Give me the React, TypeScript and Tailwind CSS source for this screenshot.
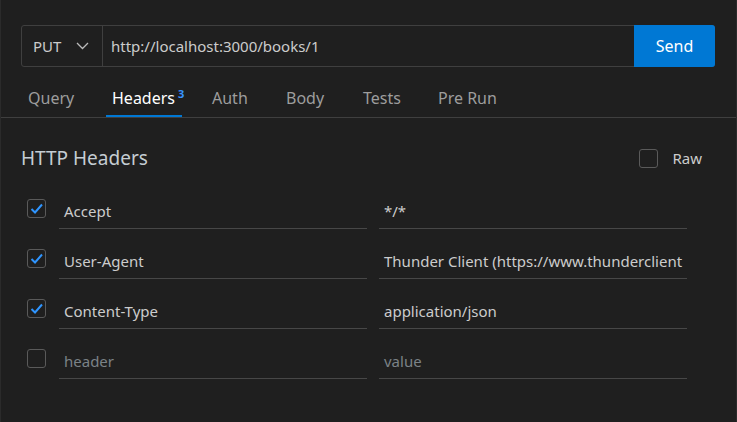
import React from "react"

const rows = [
  { key: "Accept", value: "*/*", on: true },
  { key: "User-Agent", value: "Thunder Client (https://www.thunderclient", on: true },
  { key: "Content-Type", value: "application/json", on: true },
]

const tabs = [
  { name: "Query", w: "w-[84px]" },
  { name: "Headers", w: "w-[100px]" },
  { name: "Auth", w: "w-[74px]" },
  { name: "Body", w: "w-[77px]" },
  { name: "Tests", w: "w-[75px]" },
  { name: "Pre Run", w: "w-[80px]" },
]

function Check({ on }: { on: boolean }) {
  return (
    <div className="w-[19px] h-[19px] shrink-0 rounded-[3px] border border-[#5a5a5a] flex items-center justify-center">
      {on && (
        <svg width="15" height="15" viewBox="0 0 15 15" fill="none">
          <path d="M2.5 8 L6 11.5 L13 3.5" stroke="#2f95ff" strokeWidth="2" />
        </svg>
      )}
    </div>
  )
}

export default function App() {
  return (
    <div
      className="w-[737px] h-[422px] bg-[#1f1f1f] border-l border-r border-[#2b2b2b] overflow-hidden text-[15px]"
      style={{ fontFamily: '"Noto Sans", sans-serif' }}
    >
      {/* request bar */}
      <div className="pt-[25px] pl-[20px] pr-[21px]">
        <div className="flex h-[42px] border border-[#3f3f3f] rounded-[3px]">
          <div className="w-[81px] flex items-center justify-between pl-[11px] pr-[13px] border-r border-[#3f3f3f] text-[#cccccc]">
            <span>PUT</span>
            <svg width="13" height="8" viewBox="0 0 13 8" fill="none">
              <path d="M1 1 L6.5 6.5 L12 1" stroke="#bbbbbb" strokeWidth="1.3" />
            </svg>
          </div>
          <div className="flex-1 flex items-center pl-[8px] text-[#cccccc]">http://localhost:3000/books/1</div>
          <button className="w-[81px] -my-px -mr-px bg-[#0078d4] rounded-r-[3px] text-white text-[16px]">Send</button>
        </div>
      </div>

      {/* tabs */}
      <div className="flex items-end h-[51px] pl-[27px] border-b border-[#3f3f3f]">
        {tabs.map((t) => {
          const active = t.name === "Headers"
          return (
            <div key={t.name} className={`${t.w} shrink-0`}>
              <div className={`relative inline-block pb-[7px] ${active ? "text-white" : "text-[#9d9d9d]"}`}>
                <span className="text-[16px]">{t.name}</span>
                {active && <sup className="ml-[3px] text-[11px] font-bold text-[#3794ff] -top-[6px]">3</sup>}
                {active && <div className="absolute left-[-6px] right-[2px] bottom-0 h-[2px] bg-[#0078d4]" />}
              </div>
            </div>
          )
        })}
      </div>

      {/* headers */}
      <div className="pl-[20px] pr-[34px] pt-[29px]">
        <div className="flex items-center justify-between h-[22px]">
          <span className="text-[19px] text-[#c5cdd3]">HTTP Headers</span>
          <div className="flex items-center gap-[14px] text-[#cccccc]">
            <Check on={false} />
            <span>Raw</span>
          </div>
        </div>

        <div className="mt-[14px] flex flex-col">
          {[...rows, { key: "", value: "", on: false }].map((r, i) => (
            <div key={i} className="flex items-center h-[50px] pl-[6px]">
              <Check on={r.on} />
              <div className="ml-[13px] w-[308px] h-[34px] flex items-center pl-[5px] border-b border-[#474747] mt-[8px]">
                <span className={r.key ? "text-[#cccccc]" : "text-[#7b8287]"}>{r.key || "header"}</span>
              </div>
              <div className="ml-[12px] w-[308px] h-[34px] flex items-center pl-[5px] border-b border-[#474747] mt-[8px] overflow-hidden whitespace-nowrap">
                <span className={r.value ? "text-[#cccccc]" : "text-[#7b8287]"}>{r.value || "value"}</span>
              </div>
            </div>
          ))}
        </div>
      </div>
    </div>
  )
}
